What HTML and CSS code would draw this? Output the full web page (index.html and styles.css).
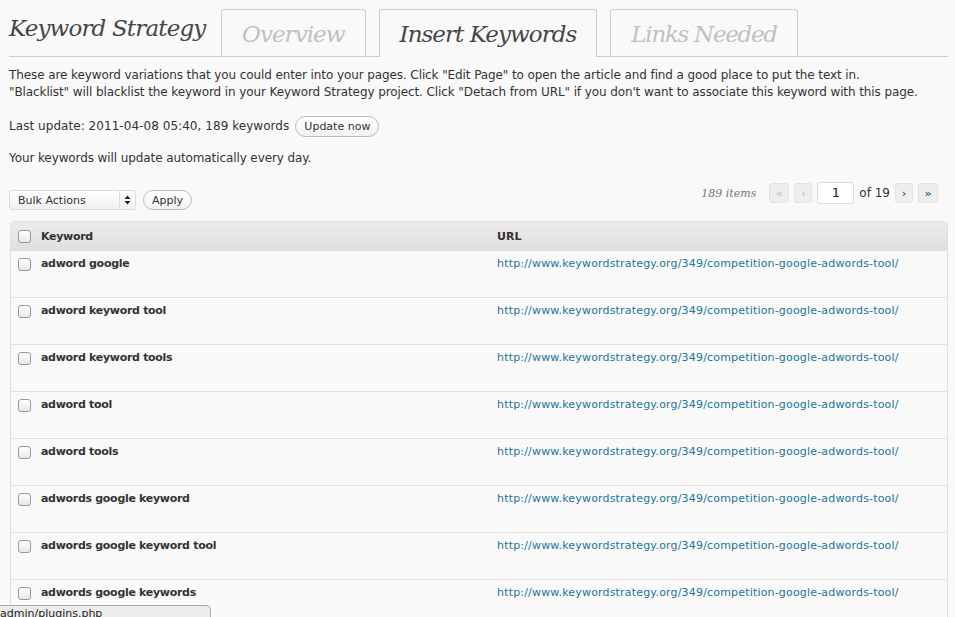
FILE: index.html
```html
<!DOCTYPE html>
<html>
<head>
<meta charset="utf-8">
<link rel="stylesheet" href="styles.css">
</head>
<body>
<div class="wrap">
  <div class="head">
    <h2 class="title">Keyword Strategy</h2>
    <div class="tabs">
      <a class="tab">Overview</a>
      <a class="tab active">Insert Keywords</a>
      <a class="tab">Links Needed</a>
    </div>
  </div>
  <p class="intro">These are keyword variations that you could enter into your pages. Click "Edit Page" to open the article and find a good place to put the text in.<br>"Blacklist" will blacklist the keyword in your Keyword Strategy project. Click "Detach from URL" if you don't want to associate this keyword with this page.</p>
  <p class="update">Last update: 2011-04-08 05:40, 189 keywords <button class="btn">Update now</button></p>
  <p class="auto">Your keywords will update automatically every day.</p>
  <div class="nav">
    <div class="bulk">
      <div class="select"><span>Bulk Actions</span><span class="arrows"><svg width="7" height="10" viewBox="0 0 7 10"><path d="M3.5 0.5 L6.5 4 H0.5 Z M3.5 9.5 L6.5 6 H0.5 Z" fill="#222"/></svg></span></div>
      <button class="btn apply">Apply</button>
    </div>
    <div class="pages">
      <span class="count">189 items</span>
      <span class="pbtn dis">«</span>
      <span class="pbtn dis narrow">‹</span>
      <span class="pinput">1</span>
      <span class="of">of 19</span>
      <span class="pbtn narrow">›</span>
      <span class="pbtn">»</span>
    </div>
  </div>
  <div class="table">
    <div class="row hdr"><span class="cb"></span><span class="kw">Keyword</span><span class="url">URL</span></div>
    <div class="row"><span class="cb"></span><span class="kw">adword google</span><a class="url">http://www.keywordstrategy.org/349/competition-google-adwords-tool/</a></div>
    <div class="row"><span class="cb"></span><span class="kw">adword keyword tool</span><a class="url">http://www.keywordstrategy.org/349/competition-google-adwords-tool/</a></div>
    <div class="row"><span class="cb"></span><span class="kw">adword keyword tools</span><a class="url">http://www.keywordstrategy.org/349/competition-google-adwords-tool/</a></div>
    <div class="row"><span class="cb"></span><span class="kw">adword tool</span><a class="url">http://www.keywordstrategy.org/349/competition-google-adwords-tool/</a></div>
    <div class="row"><span class="cb"></span><span class="kw">adword tools</span><a class="url">http://www.keywordstrategy.org/349/competition-google-adwords-tool/</a></div>
    <div class="row"><span class="cb"></span><span class="kw">adwords google keyword</span><a class="url">http://www.keywordstrategy.org/349/competition-google-adwords-tool/</a></div>
    <div class="row"><span class="cb"></span><span class="kw">adwords google keyword tool</span><a class="url">http://www.keywordstrategy.org/349/competition-google-adwords-tool/</a></div>
    <div class="row"><span class="cb"></span><span class="kw">adwords google keywords</span><a class="url">http://www.keywordstrategy.org/349/competition-google-adwords-tool/</a></div>
  </div>
</div>
<div class="status">admin/plugins.php</div>
</body>
</html>
```

FILE: styles.css
```css
html, body { margin: 0; padding: 0; }
body {
  background: #f9f9f9;
  color: #333;
  font-family: "DejaVu Sans", "Open Sans", sans-serif;
  font-size: 12px;
  overflow: hidden;
  height: 617px;
}
.wrap { padding: 0 7px 0 9px; }
.head {
  display: flex;
  align-items: flex-end;
  border-bottom: 1px solid #ccc;
  height: 57px;
  box-sizing: border-box;
  padding-top: 10px;
}
.title {
  margin: 0;
  font-family: "DejaVu Serif", Georgia, serif;
  font-style: italic;
  font-weight: normal;
  font-size: 23px;
  color: #464646;
  align-self: flex-start;
  margin-top: 5px;
  width: 212px;
  letter-spacing: -0.85px;
}
.tabs { display: flex; gap: 13px; height: 47px; }
.tab {
  display: block;
  border: 1px solid #ccc;
  border-bottom: none;
  border-radius: 3px 3px 0 0;
  padding: 0 20px;
  font-family: "DejaVu Serif", Georgia, serif;
  font-style: italic;
  font-size: 23px;
  line-height: 49px;
  color: #c1c1c1;
  letter-spacing: -0.95px;
  margin-bottom: -1px;
  height: 46px;
  overflow: hidden;
}
.tab:last-child { letter-spacing: -1.3px; }
.tab.active {
  color: #464646;
  background: #f9f9f9;
  height: 47px;
}
p { margin: 0; line-height: 17px; letter-spacing: -0.1px; }
.intro { margin-top: 10px; }
.update { margin-top: 15px; display: flex; align-items: center; gap: 6px; letter-spacing: 0.05px; }
.btn {
  font-family: inherit;
  font-size: 11px;
  color: #333;
  background: linear-gradient(#fff, #f2f2f2);
  border: 1px solid #bbb;
  border-radius: 11px;
  height: 21px;
  padding: 0 8px;
  letter-spacing: 0;
}
.auto { margin-top: 13px; }
.nav {
  display: flex;
  justify-content: space-between;
  align-items: flex-start;
  margin-top: 15px;
  padding-right: 10px;
}
.bulk { display: flex; align-items: center; gap: 7px; margin-top: 8px; }
.select {
  width: 127px;
  height: 20px;
  box-sizing: border-box;
  border: 1px solid #ddd;
  border-radius: 3px;
  background: linear-gradient(#fff, #f0f0f0);
  display: flex;
  align-items: center;
  justify-content: space-between;
  font-size: 11px;
  padding-left: 8px;
}
.arrows {
  border-left: 1px solid #ddd;
  height: 100%;
  width: 15px;
  display: flex;
  align-items: center;
  justify-content: center;
}
.apply { height: 20px; padding: 0 8px; }
.pages { display: flex; align-items: center; gap: 5px; }
.count {
  font-family: "DejaVu Serif", Georgia, serif;
  font-style: italic;
  font-size: 11px;
  color: #777;
  margin-right: 8px;
}
.pbtn {
  border: 1px solid #e3e3e3;
  border-radius: 3px;
  background: #eee;
  color: #21759b;
  font-size: 11px;
  font-weight: bold;
  display: flex;
  align-items: center;
  justify-content: center;
  box-sizing: border-box;
  width: 20px;
  height: 20px;
}
.pbtn.narrow { width: 18px; }
.pbtn.dis { color: #bbb; font-weight: normal; }
.pinput {
  width: 37px;
  height: 22px;
  box-sizing: border-box;
  border: 1px solid #ddd;
  border-radius: 3px;
  background: #fff;
  text-align: center;
  line-height: 20px;
  font-size: 13px;
  color: #222;
}
.of { font-size: 12px; }
.table {
  margin-top: 11px;
  border: 1px solid #dfdfdf;
  border-radius: 4px;
  width: 938px;
  box-sizing: border-box;
  margin-left: 1px;
  background: #f9f9f9;
}
.row {
  display: flex;
  align-items: flex-start;
  height: 47px;
  box-sizing: border-box;
  border-top: 1px solid #dfdfdf;
  padding-top: 6px;
  font-size: 11px;
}
.row.hdr {
  border-top: none;
  height: 28px;
  align-items: center;
  padding-top: 0;
  background: linear-gradient(#ececec, #dfdfdf);
  border-radius: 3px 3px 0 0;
  font-weight: bold;
  color: #333;
}
.cb {
  width: 11px;
  height: 11px;
  border: 1px solid #999;
  border-radius: 3px;
  background: linear-gradient(#fff, #e8e8e8);
  margin: 1px 0 0 7px;
  flex: none;
}
.row.hdr .cb { margin-top: 0; }
.kw { font-weight: bold; margin-left: 10px; width: 456px; letter-spacing: -0.3px; flex: none; }
.url { color: #21759b; letter-spacing: 0.18px; }
.row.hdr .url { color: #333; letter-spacing: 0; }
.status {
  position: fixed;
  left: 0;
  bottom: -6px;
  width: 210px;
  height: 16px;
  background: #ececec;
  border: 1px solid #aaa;
  border-left: none;
  border-radius: 0 5px 0 0;
  font-size: 11px;
  line-height: 16px;
  color: #222;
  overflow: hidden;
}
```
